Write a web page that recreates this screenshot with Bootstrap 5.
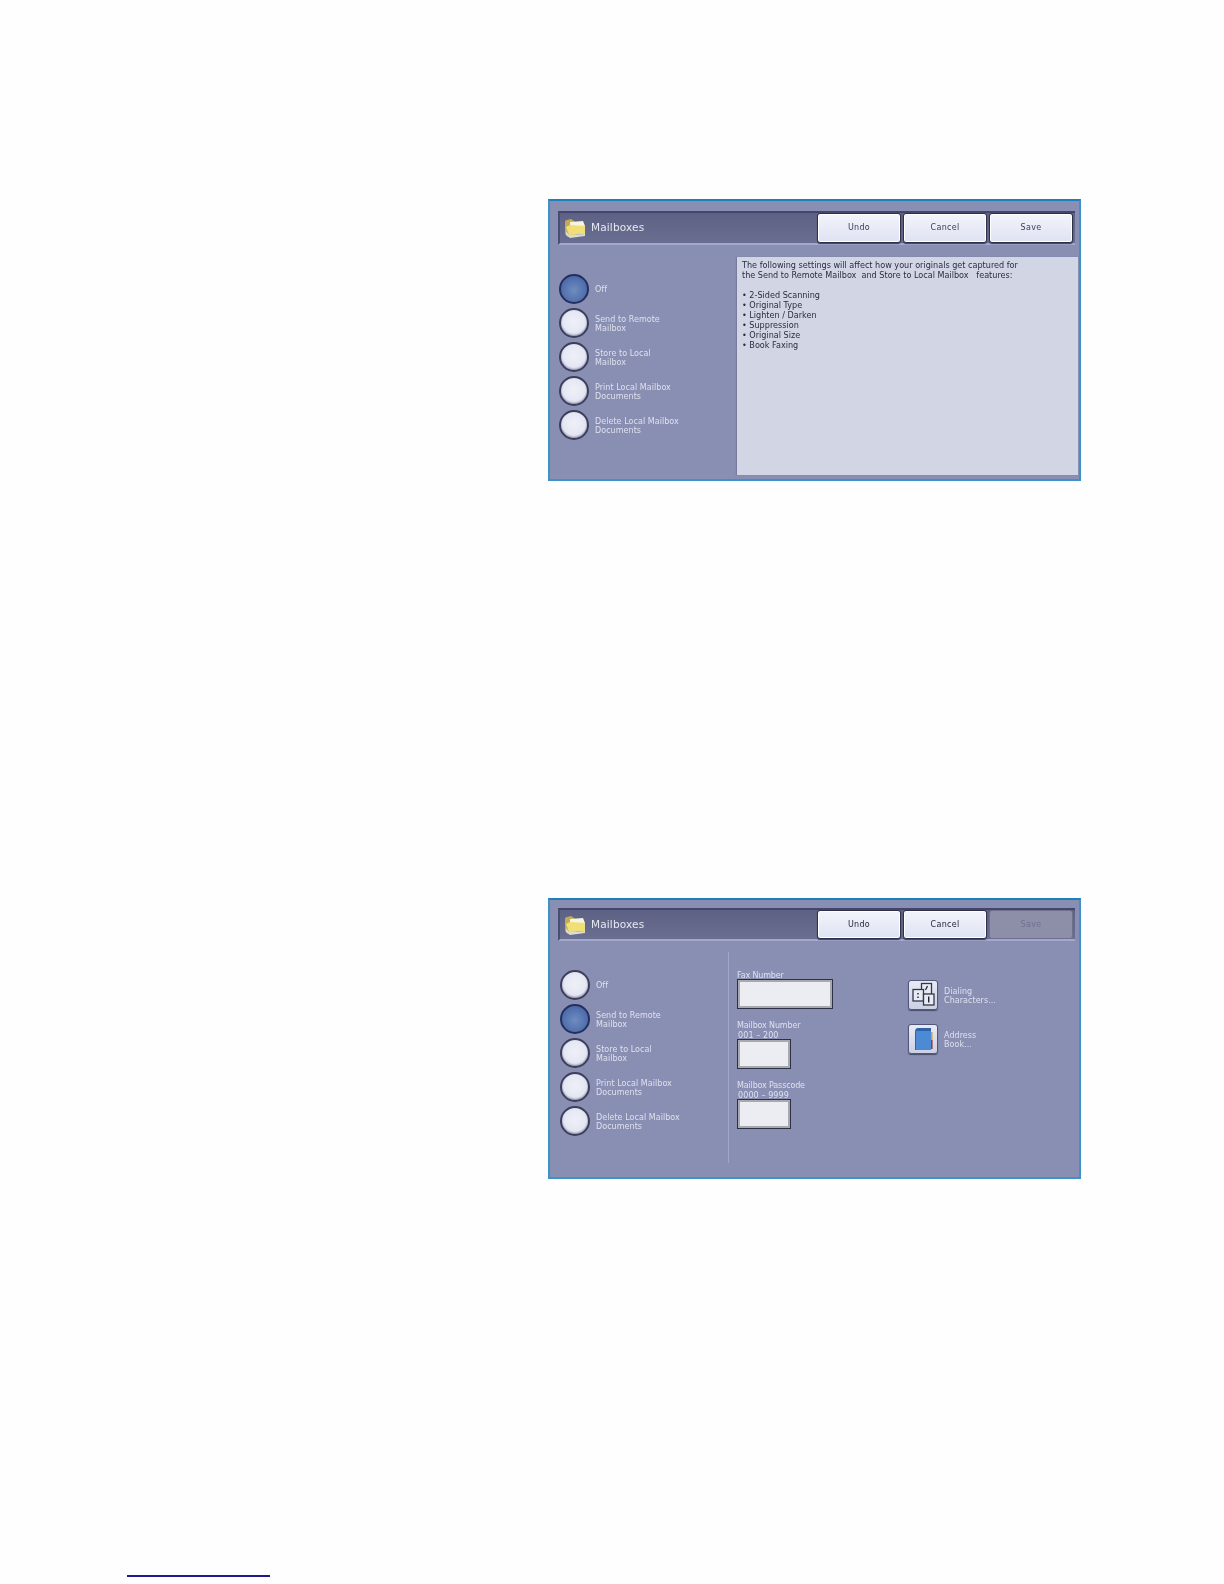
<!DOCTYPE html>
<html lang="en">
<head>
<meta charset="utf-8">
<title>Mailboxes</title>
<link rel="stylesheet" href="https://cdn.jsdelivr.net/npm/bootstrap@5.3.0/dist/css/bootstrap.min.css">
<style>
html,body{margin:0;background:#fefefe}
.sheet{height:1584px;padding-top:199px;padding-left:548px;display:flex;flex-direction:column}
.pane{width:533px;height:282px;flex:none;border:2px solid #3d93c9;border-top-color:#1f7fbd;background:#898eb3;font-family:"DejaVu Sans",sans-serif;color:#dfe1ee;filter:blur(.35px);display:flex;flex-direction:column}
.pane-two{margin-top:417px;height:281px}
.titlebar{height:34px;margin:10px 4px 0 8px;flex:none;background:linear-gradient(#5d6183,#6a6e90);border-top:2px solid #43466a;border-left:2px solid #4a4d70;border-bottom:2px solid #a3a8cc;padding-left:4px;padding-right:2px}
.pane-two .titlebar{height:33px;margin-top:8px}
.pane-two .act{height:29px}
.titlebar svg{width:22px;height:22px;flex:none}
.title-text{font-size:10.5px;margin-left:5px;letter-spacing:.15px;color:#e6e8f2}
.act{width:84px;height:30px;margin-left:2px;padding:0;font-size:8px;letter-spacing:.3px;line-height:1;color:#3a3c52;background:linear-gradient(#f2f4fb,#dfe3f2);border:1px solid #2f3148;border-radius:3px;box-shadow:inset 0 0 0 1px #fff,0 1px 1px #3a3d5c;font-family:inherit}
.pane-two .act{color:#23253a}
.pane-two .act:disabled{background:#8d8fa8;border:1px solid #6e708c;box-shadow:none;color:#6f7191;opacity:1}
.main{flex:1;display:flex;min-height:0}
.modes{width:187px;flex:none;padding-left:9px;padding-top:29px;gap:4px}
.pane-two .modes{padding-left:10px}
.mode{height:30px;gap:6px}
.dot{width:30px;height:30px;flex:none;border-radius:50%;background:radial-gradient(circle at 50% 45%,#eef0f8 0,#e4e7f3 60%,#c3c6dc 100%);border:2px solid #3c3e5c;box-shadow:inset 0 -1px 2px #8b8ea8}
.dot-on{background:radial-gradient(circle at 50% 55%,#6f8dc0 0,#4f6dab 65%,#3f5a97 100%);border-color:#23305f;box-shadow:none}
.lbl{font-size:8px;line-height:9px;letter-spacing:.05px;color:#dfe1ee;padding-top:1px}
.info{width:341px;height:218px;margin-top:12px;background:#d2d5e3;box-shadow:-1px 0 1px #777b9e;padding:3px 5px;font-size:8.1px;line-height:10px;color:#2a2c42;white-space:pre}
.rule{width:1px;height:211px;margin-top:11px;margin-left:-9px;margin-right:8px;background:#a2a6c6;flex:none}
.fields{width:171px;flex:none;padding-top:30px}
.fld-lbl{font-size:8px;line-height:10px;letter-spacing:-.15px;color:#dfe1ee;margin-bottom:-2px}
.fld-range{letter-spacing:.1px;padding-left:1px}
.fld{height:30px;width:54px;background:#ecedf3;border:1px solid #2e3046;box-shadow:inset 0 0 0 2px #a8a9ac;margin-bottom:12px}
.fld-wide{width:96px}
.tools{padding-top:39px;gap:14px}
.tool{gap:6px;height:30px}
.tool-btn{width:30px;height:30px;padding:0;flex:none;background:linear-gradient(#e8ebf6,#ccd0e4);border:1px solid #55577a;border-radius:3px;box-shadow:0 1px 1px #4a4d6c}
.tool-btn svg{width:28px;height:28px;display:block}
.foot-rule{width:143px;height:2px;background:#1c1c8e;margin-top:auto;margin-bottom:7px;margin-left:-421px;flex:none}
</style>
</head>
<body>
<div class="sheet">

  <section class="pane">
    <div class="titlebar d-flex align-items-center">
      <svg viewBox="0 0 22 22"><path d="M1 5 Q1 3 3 3 L7 2 L10 4 L12 6 L12 18 L4 20 L1 17 Z" fill="#c2ab52"/><path d="M6 5 L19 4 L21 9 L21 15 L6 15 Z" fill="#f6f4dc"/><path d="M2 10 L6 8 L21 9 L21 17 L5 18 Z" fill="#f0df77"/><path d="M2 14 L5 18 L21 17 L21 19 L6 21 L2 18 Z" fill="#dcdcd0"/></svg>
      <span class="title-text flex-grow-1">Mailboxes</span>
      <button class="btn act" type="button">Undo</button>
      <button class="btn act" type="button">Cancel</button>
      <button class="btn act" type="button">Save</button>
    </div>
    <div class="main">
      <div class="modes d-flex flex-column">
        <div class="mode d-flex align-items-center"><span class="dot dot-on"></span><span class="lbl">Off</span></div>
        <div class="mode d-flex align-items-center"><span class="dot"></span><span class="lbl">Send to Remote<br>Mailbox</span></div>
        <div class="mode d-flex align-items-center"><span class="dot"></span><span class="lbl">Store to Local<br>Mailbox</span></div>
        <div class="mode d-flex align-items-center"><span class="dot"></span><span class="lbl">Print Local Mailbox<br>Documents</span></div>
        <div class="mode d-flex align-items-center"><span class="dot"></span><span class="lbl">Delete Local Mailbox<br>Documents</span></div>
      </div>
      <div class="info">The following settings will affect how your originals get captured for
the Send to Remote Mailbox  and Store to Local Mailbox   features:

• 2-Sided Scanning
• Original Type
• Lighten / Darken
• Suppression
• Original Size
• Book Faxing</div>
    </div>
  </section>

  <section class="pane pane-two">
    <div class="titlebar d-flex align-items-center">
      <svg viewBox="0 0 22 22"><path d="M1 5 Q1 3 3 3 L7 2 L10 4 L12 6 L12 18 L4 20 L1 17 Z" fill="#c2ab52"/><path d="M6 5 L19 4 L21 9 L21 15 L6 15 Z" fill="#f6f4dc"/><path d="M2 10 L6 8 L21 9 L21 17 L5 18 Z" fill="#f0df77"/><path d="M2 14 L5 18 L21 17 L21 19 L6 21 L2 18 Z" fill="#dcdcd0"/></svg>
      <span class="title-text flex-grow-1">Mailboxes</span>
      <button class="btn act" type="button">Undo</button>
      <button class="btn act" type="button">Cancel</button>
      <button class="btn act" type="button" disabled>Save</button>
    </div>
    <div class="main">
      <div class="modes d-flex flex-column">
        <div class="mode d-flex align-items-center"><span class="dot"></span><span class="lbl">Off</span></div>
        <div class="mode d-flex align-items-center"><span class="dot dot-on"></span><span class="lbl">Send to Remote<br>Mailbox</span></div>
        <div class="mode d-flex align-items-center"><span class="dot"></span><span class="lbl">Store to Local<br>Mailbox</span></div>
        <div class="mode d-flex align-items-center"><span class="dot"></span><span class="lbl">Print Local Mailbox<br>Documents</span></div>
        <div class="mode d-flex align-items-center"><span class="dot"></span><span class="lbl">Delete Local Mailbox<br>Documents</span></div>
      </div>
      <div class="rule"></div>
      <div class="fields">
        <div class="fld-lbl">Fax Number</div>
        <div class="fld fld-wide"></div>
        <div class="fld-lbl">Mailbox Number<div class="fld-range">001 – 200</div></div>
        <div class="fld"></div>
        <div class="fld-lbl">Mailbox Passcode<div class="fld-range">0000 – 9999</div></div>
        <div class="fld"></div>
      </div>
      <div class="tools d-flex flex-column">
        <div class="tool d-flex align-items-center">
          <button class="btn tool-btn" type="button" aria-label="Dialing Characters"><svg viewBox="0 0 28 28"><rect x="12.5" y="2.5" width="10" height="11" fill="#e9ebf2" stroke="#34364c" stroke-width="1.3"/><rect x="4" y="8.5" width="10.5" height="11.5" fill="#e9ebf2" stroke="#34364c" stroke-width="1.3"/><rect x="14.5" y="13" width="10.5" height="11" fill="#e9ebf2" stroke="#34364c" stroke-width="1.3"/><path d="M18.5 5 L16.5 9" stroke="#1e2034" stroke-width="1.3"/><path d="M9 12v1.6M9 15.5v1.6M19.7 15.5v6" stroke="#1e2034" stroke-width="1.4"/></svg></button>
          <span class="lbl">Dialing<br>Characters...</span>
        </div>
        <div class="tool d-flex align-items-center">
          <button class="btn tool-btn" type="button" aria-label="Address Book"><svg viewBox="0 0 28 28"><path d="M6 7 Q6 3 9 3 L22 3 L22 25 L6 25 Z" fill="#2f63a8"/><rect x="7" y="6" width="15" height="19" fill="#4d8ad6"/><rect x="22" y="7" width="1.6" height="8" fill="#d9a23f"/><rect x="22" y="15" width="1.6" height="9" fill="#9c3a3a"/></svg></button>
          <span class="lbl">Address<br>Book...</span>
        </div>
      </div>
    </div>
  </section>

  <div class="foot-rule"></div>
</div>
<script src="https://cdn.jsdelivr.net/npm/bootstrap@5.3.0/dist/js/bootstrap.bundle.min.js"></script>
</body>
</html>
